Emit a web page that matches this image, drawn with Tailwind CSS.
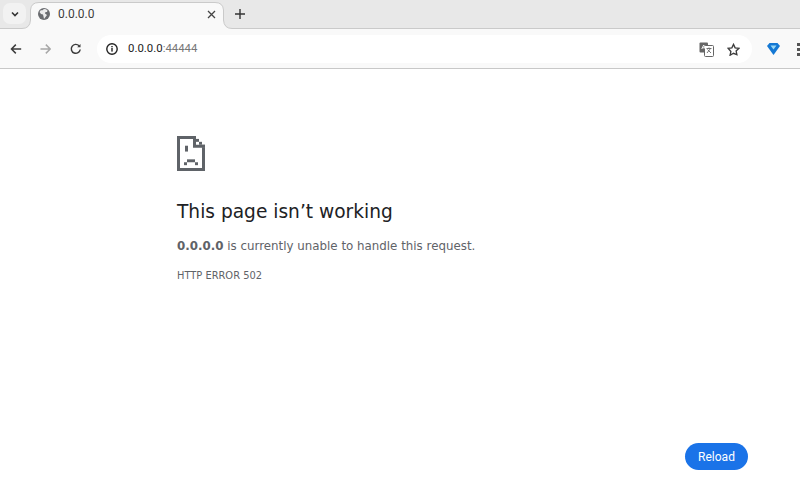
<!DOCTYPE html>
<html>
<head>
<meta charset="utf-8">
<script src="https://cdn.jsdelivr.net/npm/@tailwindcss/browser@4"></script>
</head>
<body class="w-[800px] h-[483px] overflow-hidden bg-white flex flex-col font-['Roboto',sans-serif]">
  <!-- tab strip -->
  <div class="h-[29px] shrink-0 bg-[#e8e8e8] flex items-start relative">
    <svg width="800" height="29" viewBox="0 0 800 29" class="absolute left-0 top-0" fill="#f9f9f9" stroke="#cacaca">
      <path d="M0 29.500V28.500H22Q30 28.500 30.500 20V10Q31 2.500 39 2.500H215Q223 2.500 223.500 10V20Q224 28.500 232 28.500H800V29.500Z"/>
    </svg>
    <div class="absolute left-[3px] top-[3px] w-[23px] h-[21px] rounded-[7px] bg-[#f2f2f2] flex items-center justify-center">
      <svg width="10" height="10" viewBox="0 0 10 10" fill="none" stroke="#333" stroke-width="1.600"><path d="M2 3.500 5 6.500 8 3.500"/></svg>
    </div>
    <div class="relative ml-[31px] mt-[2px] w-[193px] h-[24px] flex items-center pl-[7px] pr-[8px] text-[12px] text-[#3c3c3c]">
      <svg width="12" height="12" viewBox="0 0 12 12" class="mr-[8px]"><circle cx="6" cy="6" r="6" fill="#6a6c70"/><path d="M6 1 4 2.500 3 2 1.500 4 3 6l2 .5.5 2L6 11l1.500-2L9 7 7 5.500 7.500 4 9 4 9.500 2.500 8 1.200Z" fill="#f9f9f9" opacity=".9"/></svg>
      <span class="flex-1">0.0.0.0</span>
      <svg width="9" height="9" viewBox="0 0 9 9" stroke="#444" stroke-width="1.300"><path d="M1 1 8 8M8 1 1 8"/></svg>
    </div>
    <svg width="10" height="10" viewBox="0 0 10 10" stroke="#333" stroke-width="1.400" class="relative ml-[11px] mt-[9px]"><path d="M5 0V10M0 5H10"/></svg>
  </div>
  <!-- toolbar -->
  <div class="h-[40px] shrink-0 bg-[#f9f9f9] border-b border-[#c8c8c8] flex items-center overflow-hidden">
    <svg width="12" height="12" viewBox="0 0 12 12" fill="none" stroke="#3c3c3c" stroke-width="1.500" class="ml-[10px]"><path d="M11.500 6H1.500M6 1.500 1.500 6 6 10.500"/></svg>
    <svg width="12" height="12" viewBox="0 0 12 12" fill="none" stroke="#a8a8a8" stroke-width="1.500" class="ml-[18px]"><path d="M.5 6H10.500M6 1.500 10.500 6 6 10.500"/></svg>
    <svg width="12" height="12" viewBox="0 0 12 12" fill="none" stroke="#3c3c3c" stroke-width="1.500" class="ml-[19px]"><path d="M10.500 6.500A4.600 4.600 0 1 1 9.300 2.700"/><path d="M10.800 .8V4.200H7.400" fill="#3c3c3c" stroke="none"/></svg>
    <div class="ml-[15px] w-[655px] h-[28px] mt-[1px] shrink-0 rounded-full bg-white flex items-center pl-[9px] pr-[12px]">
      <svg width="12" height="12" viewBox="0 0 12 12" fill="none"><circle cx="6" cy="6" r="5.200" stroke="#222" stroke-width="1.400"/><rect x="5.300" y="5" width="1.400" height="3.600" fill="#222"/><rect x="5.300" y="3" width="1.400" height="1.300" fill="#222"/></svg>
      <span class="ml-[10px] text-[11.400px] text-[#222]">0.0.0.0<span class="text-[#777]">:44444</span></span>
      <svg width="15" height="15" viewBox="0 0 15 15" class="ml-auto" fill="none"><rect x="0.500" y="0.500" width="8.500" height="10" rx="1" fill="#666"/><rect x="5.500" y="3.500" width="9" height="11" rx="1" fill="#fff" stroke="#666"/><path d="M7.500 6.500H12.500M10 5.500V6.500M11.500 6.500 8 11M8.500 7.500 12 11" stroke="#666" stroke-width=".9"/><path d="M2.700 7 4.700 3 6.500 7M3.200 5.800H6" stroke="#fff" stroke-width=".9"/></svg>
      <svg width="13" height="13" viewBox="0 0 24 24" fill="none" stroke="#3c3c3c" stroke-width="2.400" class="ml-[13px]"><path d="M12 2.500 15 9l7 .8-5.200 4.800 1.500 7L12 19l-6.300 3.600 1.500-7L2 9.800 9 9Z"/></svg>
    </div>
    <svg width="13" height="12" viewBox="0 0 13 12" class="ml-[15px] mt-[1px] shrink-0"><path d="M2.500 0H10.500L13 3 6.500 12 0 3Z" fill="#1478d4"/><path d="M3.500 2.500H9.500L6.500 6.500Z" fill="#9ad8f5"/></svg>
    <div class="ml-[17px] mt-[1px] shrink-0 flex flex-col gap-[2px]"><span class="w-[3px] h-[3px] bg-[#555]"></span><span class="w-[3px] h-[3px] bg-[#555]"></span><span class="w-[3px] h-[3px] bg-[#555]"></span></div>
  </div>
  <!-- page -->
  <main class="flex-1 flex flex-col pl-[177px] pt-[67px] pr-[52px] pb-[13px] font-['DejaVu_Sans',sans-serif]">
    <svg width="28" height="35" viewBox="0 0 28 36" preserveAspectRatio="none" class="block">
      <path fill="#5f6368" d="M0 0H18V3H3V33H25V12H28V36H0Z"/>
      <path fill="#5f6368" d="M16 0H19V9H28V12H16Z"/>
      <rect x="19" y="3" width="3" height="3" fill="#5f6368"/><rect x="22" y="6" width="3" height="3" fill="#5f6368"/><rect x="25" y="9" width="3" height="3" fill="#5f6368"/>
      <rect x="8" y="10" width="3" height="6" fill="#5f6368"/>
      <rect x="10" y="24" width="8" height="3" fill="#5f6368"/><rect x="7" y="27" width="3" height="3" fill="#5f6368"/><rect x="18" y="27" width="3" height="3" fill="#5f6368"/>
    </svg>
    <h1 class="mt-[29px] text-[18.600px] leading-[24px] font-normal text-[#202124]">This page isn’t working</h1>
    <p class="mt-[12px] text-[11.850px] leading-[20px] text-[#5f6368]"><strong class="font-bold">0.0.0.0</strong> is currently unable to handle this request.</p>
    <p class="mt-[12px] text-[9.900px] leading-[16px] text-[#5f6368]">HTTP ERROR 502</p>
    <button class="mt-auto self-end w-[63px] h-[27px] rounded-full bg-[#1a73e8] text-white text-[12px] font-['Roboto',sans-serif]">Reload</button>
  </main>
</body>
</html>
